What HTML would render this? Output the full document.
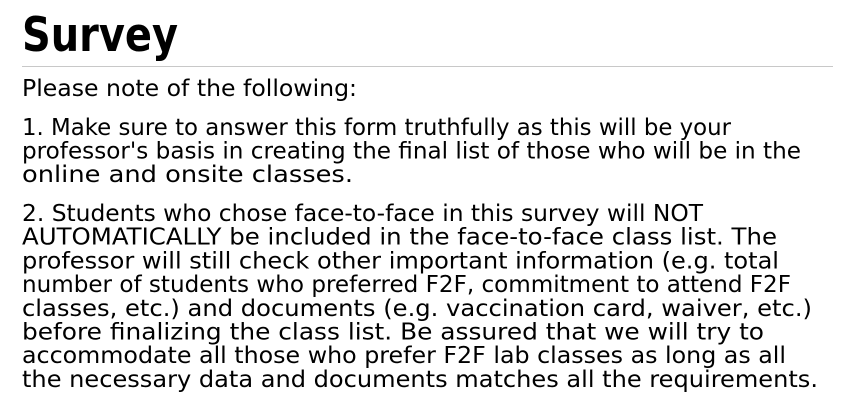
<!DOCTYPE html>
<html><head><meta charset="utf-8"><style>
html,body{margin:0;padding:0;background:#fff;width:856px;height:417px;overflow:hidden}
svg{display:block}
text{font-family:"DejaVu Sans","Liberation Sans",sans-serif;fill:#000}
.b{font-size:23px}
</style></head><body>
<svg width="856" height="417" viewBox="0 0 856 417">
<text x="22" y="51" font-size="47" font-weight="bold" textLength="156" lengthAdjust="spacingAndGlyphs">Survey</text>
<rect x="22" y="66" width="811" height="1" fill="#c8c8c8"/>
<text class="b" x="22" y="96" textLength="335" lengthAdjust="spacingAndGlyphs">Please note of the following:</text>
<text class="b" x="22" y="135" textLength="709" lengthAdjust="spacingAndGlyphs">1. Make sure to answer this form truthfully as this will be your</text>
<text class="b" x="22" y="158.5" textLength="779" lengthAdjust="spacingAndGlyphs">professor's basis in creating the final list of those who will be in the</text>
<text class="b" x="22" y="182" textLength="331" lengthAdjust="spacingAndGlyphs">online and onsite classes.</text>
<text class="b" x="22" y="221" textLength="681" lengthAdjust="spacingAndGlyphs">2. Students who chose face-to-face in this survey will NOT</text>
<text class="b" x="22" y="244.7" textLength="755" lengthAdjust="spacingAndGlyphs">AUTOMATICALLY be included in the face-to-face class list. The</text>
<text class="b" x="22" y="268.4" textLength="757" lengthAdjust="spacingAndGlyphs">professor will still check other important information (e.g. total</text>
<text class="b" x="22" y="292" textLength="769" lengthAdjust="spacingAndGlyphs">number of students who preferred F2F, commitment to attend F2F</text>
<text class="b" x="22" y="315.8" textLength="790" lengthAdjust="spacingAndGlyphs">classes, etc.) and documents (e.g. vaccination card, waiver, etc.)</text>
<text class="b" x="22" y="339.5" textLength="742" lengthAdjust="spacingAndGlyphs">before finalizing the class list. Be assured that we will try to</text>
<text class="b" x="22" y="363.2" textLength="764" lengthAdjust="spacingAndGlyphs">accommodate all those who prefer F2F lab classes as long as all</text>
<text class="b" x="22" y="387" textLength="796" lengthAdjust="spacingAndGlyphs">the necessary data and documents matches all the requirements.</text>
</svg>
</body></html>
